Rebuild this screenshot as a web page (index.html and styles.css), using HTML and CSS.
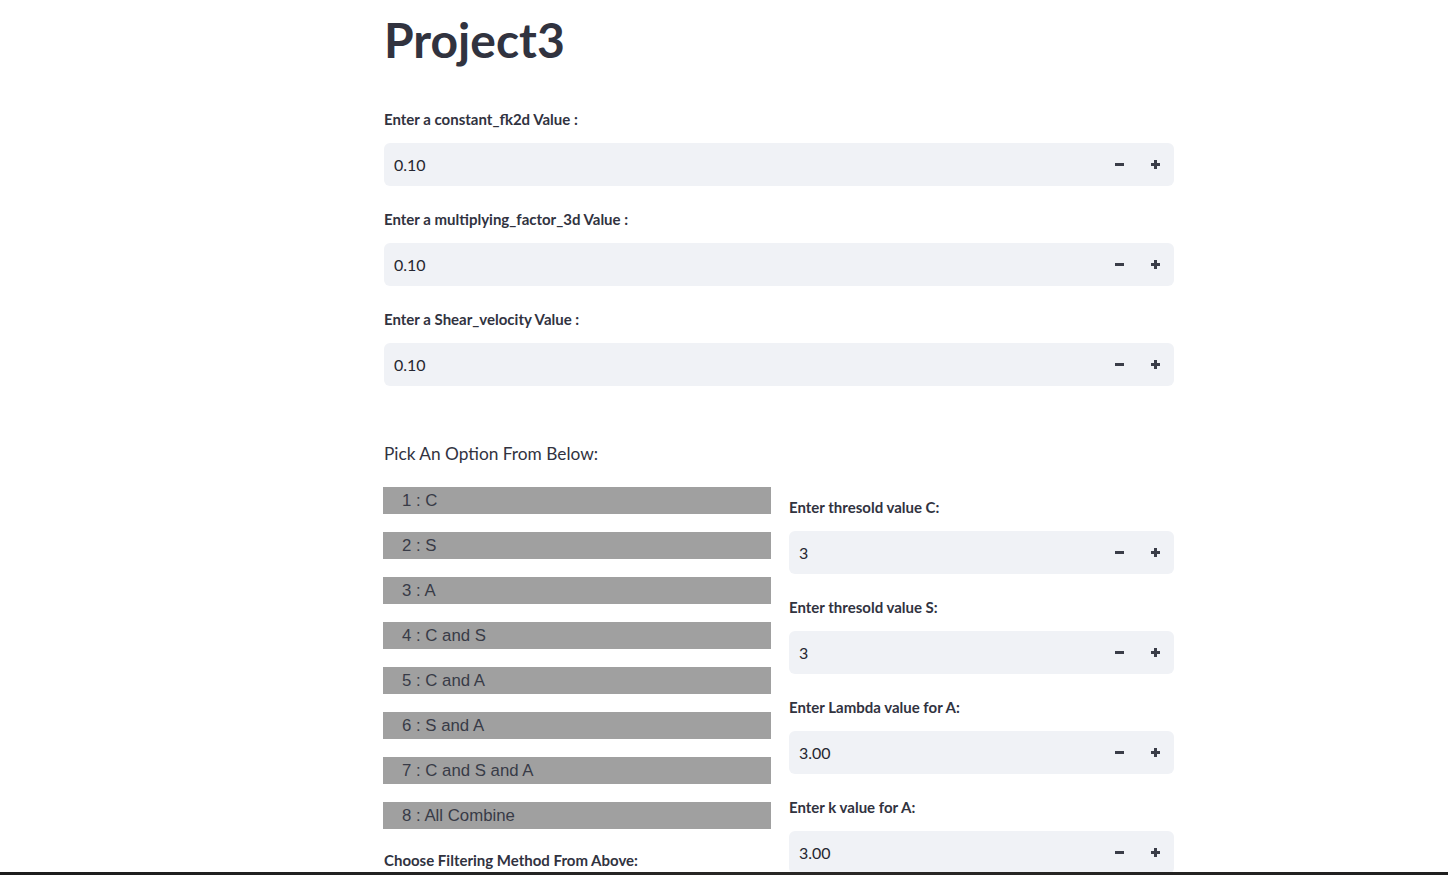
FILE: index.html
```html
<!DOCTYPE html>
<html lang="en">
<head>
<meta charset="utf-8">
<title>Project3</title>
<link rel="stylesheet" href="styles.css">
</head>
<body>
<div class="page">
  <main class="main">
    <h1 class="title">Project3</h1>

    <div class="field">
      <label class="label">Enter a constant_fk2d Value :</label>
      <div class="numinput">
        <span class="value">0.10</span>
        <span class="step"><span class="minus"></span></span>
        <span class="step"><span class="plus"></span></span>
      </div>
    </div>

    <div class="field">
      <label class="label">Enter a multiplying_factor_3d Value :</label>
      <div class="numinput">
        <span class="value">0.10</span>
        <span class="step"><span class="minus"></span></span>
        <span class="step"><span class="plus"></span></span>
      </div>
    </div>

    <div class="field">
      <label class="label">Enter a Shear_velocity Value :</label>
      <div class="numinput">
        <span class="value">0.10</span>
        <span class="step"><span class="minus"></span></span>
        <span class="step"><span class="plus"></span></span>
      </div>
    </div>

    <p class="pick">Pick An Option From Below:</p>

    <div class="cols">
      <div class="col-left">
        <div class="opt">1 : C</div>
        <div class="opt">2 : S</div>
        <div class="opt">3 : A</div>
        <div class="opt">4 : C and S</div>
        <div class="opt">5 : C and A</div>
        <div class="opt">6 : S and A</div>
        <div class="opt">7 : C and S and A</div>
        <div class="opt">8 : All Combine</div>
        <label class="label choose">Choose Filtering Method From Above:</label>
      </div>
      <div class="col-right">
        <div class="field">
          <label class="label">Enter thresold value C:</label>
          <div class="numinput">
            <span class="value">3</span>
            <span class="step"><span class="minus"></span></span>
            <span class="step"><span class="plus"></span></span>
          </div>
        </div>
        <div class="field">
          <label class="label">Enter thresold value S:</label>
          <div class="numinput">
            <span class="value">3</span>
            <span class="step"><span class="minus"></span></span>
            <span class="step"><span class="plus"></span></span>
          </div>
        </div>
        <div class="field">
          <label class="label">Enter Lambda value for A:</label>
          <div class="numinput">
            <span class="value">3.00</span>
            <span class="step"><span class="minus"></span></span>
            <span class="step"><span class="plus"></span></span>
          </div>
        </div>
        <div class="field">
          <label class="label">Enter k value for A:</label>
          <div class="numinput">
            <span class="value">3.00</span>
            <span class="step"><span class="minus"></span></span>
            <span class="step"><span class="plus"></span></span>
          </div>
        </div>
      </div>
    </div>
  </main>
</div>
<div class="taskbar"></div>
</body>
</html>
```

FILE: styles.css
```css
html, body {
  margin: 0;
  padding: 0;
  background: #ffffff;
  height: 875px;
  overflow: hidden;
}

body {
  font-family: Lato, "Noto Sans", sans-serif;
  color: #31333f;
}

.page {
  display: flex;
}

.main {
  width: 790px;
  margin-left: 384px;
  display: flex;
  flex-direction: column;
}

.title {
  margin: 9px 0 0 0;
  font-size: 48px;
  line-height: 62px;
  font-weight: 700;
  color: #31333f;
  letter-spacing: 0;
}

.field {
  display: flex;
  flex-direction: column;
}

.main > .title + .field {
  margin-top: 38px;
}

.field + .field {
  margin-top: 23px;
}

.col-right .field + .field {
  margin-top: 23px;
}

.label {
  display: block;
  font-size: 15px;
  line-height: 20px;
  font-weight: 700;
  color: #31333f;
  height: 20px;
  white-space: nowrap;
}

.numinput {
  margin-top: 14px;
  height: 43px;
  background: #f0f2f6;
  border-radius: 6px;
  display: flex;
  align-items: center;
  padding-right: 1px;
}

.value {
  flex: 1;
  padding-left: 10px;
  font-size: 16px;
  color: #262730;
}

.step {
  width: 36px;
  height: 43px;
  display: flex;
  align-items: center;
  justify-content: center;
}

.minus {
  width: 9px;
  height: 3px;
  background: #3a3d48;
}

.plus {
  width: 9px;
  height: 9px;
  position: relative;
}

.plus::before,
.plus::after {
  content: "";
  position: absolute;
  background: #3a3d48;
}

.plus::before {
  left: 0;
  top: 3px;
  width: 9px;
  height: 3px;
}

.plus::after {
  left: 3px;
  top: 0;
  width: 3px;
  height: 9px;
}

.pick {
  margin: 56px 0 0 0;
  font-size: 17.3px;
  line-height: 24px;
  font-weight: 400;
  color: #31333f;
}

.cols {
  margin-top: 21px;
  display: grid;
  grid-template-columns: 387px 385px;
  column-gap: 18px;
}

.col-left {
  display: flex;
  flex-direction: column;
  gap: 18px;
  margin-left: -1px;
}

.opt {
  height: 27px;
  background: #a0a0a0;
  font-family: "Liberation Sans", Arial, sans-serif;
  font-size: 16.8px;
  line-height: 27px;
  padding-left: 19px;
  color: #383b47;
}

.choose {
  margin-top: 3px;
  margin-left: 1px;
}

.col-right {
  padding-top: 10px;
  display: flex;
  flex-direction: column;
}

.taskbar {
  position: fixed;
  left: 0;
  right: 0;
  bottom: 0;
  height: 3px;
  background: linear-gradient(90deg, #1c1c1c 0%, #222 25%, #2a2826 60%, #1f1f1f 100%);
}
```
